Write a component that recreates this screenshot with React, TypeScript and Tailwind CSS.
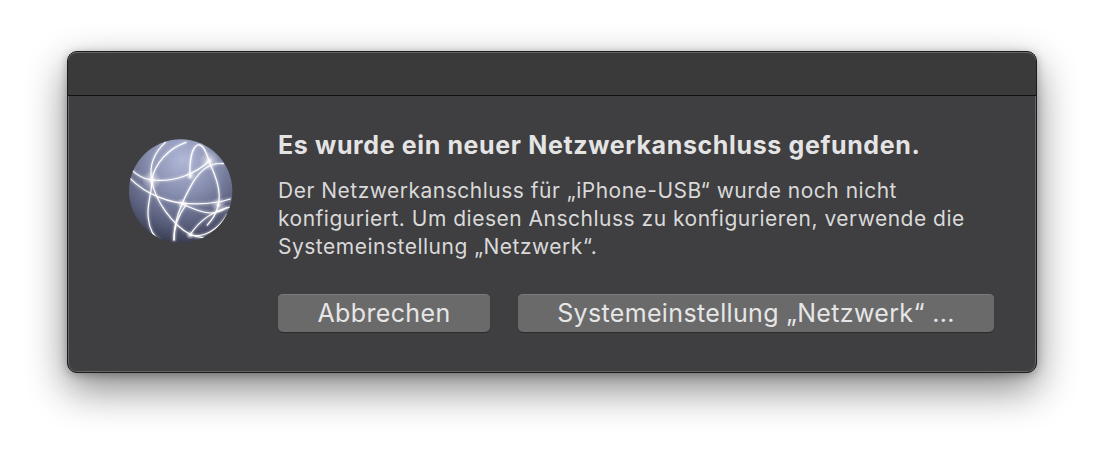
const arcs = [
  "M64 134 C85 155 105 163 125 165 C190 172 255 150 300 105",
  "M60 160 C110 210 180 235 240 236 C290 238 330 232 361 222",
  "M166 52 C130 85 118 125 125 165 C128 200 108 240 115 280 C118 310 130 335 152 348",
  "M125 165 C135 115 175 70 228 52",
  "M125 165 C135 230 190 300 240 328 C265 340 295 340 312 336",
  "M240 158 C238 110 245 70 262 60 C280 55 290 85 297 108 C315 150 335 195 325 240 C318 270 305 285 292 300",
  "M192 345 C190 290 215 230 250 170 C275 130 305 112 340 116",
  "M216 236 C245 250 275 262 300 264 C320 264 335 258 350 248",
  "M240 330 C265 290 310 255 362 246",
  "M240 330 C280 340 325 315 352 268",
  "M192 345 C192 310 205 270 228 240",
];

const glows = [
  [125, 165, 30],
  [297, 108, 30],
  [325, 240, 24],
  [216, 236, 18],
  [242, 152, 16],
  [240, 330, 14],
];

function Globe() {
  return (
    <svg width="110" height="110" viewBox="48 36 330 330" className="shrink-0">
      <defs>
        <radialGradient id="ball" cx="52%" cy="20%" r="88%">
          <stop offset="0%" stopColor="#b2b9d8" />
          <stop offset="38%" stopColor="#868dae" />
          <stop offset="72%" stopColor="#585d7a" />
          <stop offset="100%" stopColor="#2c2f42" />
        </radialGradient>
        <radialGradient id="spot">
          <stop offset="0%" stopColor="#ffffff" stopOpacity="1" />
          <stop offset="35%" stopColor="#ffffff" stopOpacity="0.4" />
          <stop offset="100%" stopColor="#ffffff" stopOpacity="0" />
        </radialGradient>
        <clipPath id="ballClip">
          <circle cx="212" cy="198" r="155" />
        </clipPath>
        <filter id="soft" x="-20%" y="-20%" width="140%" height="140%">
          <feGaussianBlur stdDeviation="3" />
        </filter>
      </defs>
      <circle cx="212" cy="198" r="155" fill="url(#ball)" />
      <g clipPath="url(#ballClip)" fill="none" strokeLinecap="round">
        <g stroke="#ffffff" strokeOpacity="0.35" strokeWidth="9" filter="url(#soft)">
          {arcs.map((d) => (
            <path key={d} d={d} />
          ))}
        </g>
        <g stroke="#ffffff" strokeWidth="3.6">
          {arcs.map((d) => (
            <path key={d} d={d} />
          ))}
        </g>
        {glows.map(([x, y, r]) => (
          <circle key={x} cx={x} cy={y} r={r} fill="url(#spot)" />
        ))}
      </g>
    </svg>
  );
}

export default function App() {
  return (
    <div className="w-[1104px] h-[456px] overflow-hidden bg-white pl-[67px] pt-[51px] font-['Inter',sans-serif]">
      <div className="w-[970px] h-[322px] flex flex-col rounded-[10px] border border-[#1c1c1c] bg-[#3f3e40] shadow-[inset_0_0_0_1px_#666667,0_16px_40px_rgba(0,0,0,0.48),0_2px_10px_rgba(0,0,0,0.28)]">
        <div className="h-[44px] shrink-0 rounded-t-[9px] border-b border-b-[#111111] bg-[#3b3a3b] shadow-[inset_0_1px_0_#666667]" />
        <div className="flex flex-1 pl-[58px] pt-[41px]">
          <Globe />
          <div className="flex flex-col pl-[42px]">
            <h1 className="text-[25px] leading-[28px] font-bold tracking-[0.63px] text-[#e4e4e4] -mt-[6px]">
              Es wurde ein neuer Netzwerkanschluss gefunden.
            </h1>
            <p className="mt-[18px] w-[700px] text-[21px] leading-[28px] tracking-[0.5px] text-[#d9d9d9]">
              Der Netzwerkanschluss für „iPhone-USB“ wurde noch nicht
              <br />
              konfiguriert. Um diesen Anschluss zu konfigurieren, verwende die
              <br />
              Systemeinstellung „Netzwerk“.
            </p>
            <div className="mt-[33px] flex gap-[28px]">
              <button className="h-[38px] w-[212px] rounded-[5px] bg-[#6a6a6b] pt-[1px] text-[25px] tracking-[0.35px] text-[#e6e6e6] shadow-[inset_0_1px_0_#7a7a7b,0_1px_1px_rgba(0,0,0,0.3)]">
                Abbrechen
              </button>
              <button className="h-[38px] w-[476px] rounded-[5px] bg-[#6a6a6b] pt-[1px] text-[25px] tracking-[0.35px] text-[#e6e6e6] shadow-[inset_0_1px_0_#7a7a7b,0_1px_1px_rgba(0,0,0,0.3)]">
                Systemeinstellung „Netzwerk“ ...
              </button>
            </div>
          </div>
        </div>
      </div>
    </div>
  );
}
